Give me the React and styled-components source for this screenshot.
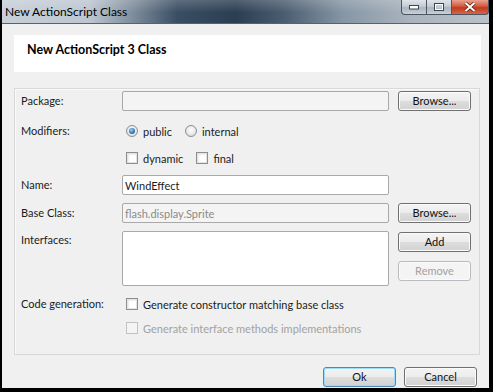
import styled, { createGlobalStyle } from "styled-components";

const GlobalStyle = createGlobalStyle`
  html, body {
    margin: 0;
    padding: 0;
    background: #000;
  }
  body {
    font-family: Lato, "Liberation Sans", Arial, sans-serif;
    font-size: 11px;
    color: #1b1b1b;
  }
`;

const Frame = styled.div`
  width: 493px;
  height: 392px;
  box-sizing: border-box;
  background: #000;
  padding: 0 4px 4px 2px;
  display: flex;
  flex-direction: column;
`;

const TitleBar = styled.div`
  height: 23px;
  flex-shrink: 0;
  display: flex;
  justify-content: space-between;
  background:
    linear-gradient(180deg, rgba(255, 255, 255, 0.18) 0%, rgba(255, 255, 255, 0) 55%),
    linear-gradient(90deg, #c7cfd8 0%, #bcc6d0 18%, #7d8c9b 27%, #3a4e63 36%, #2b3e52 48%, #4b5d70 58%, #8696a5 70%, #aab4be 84%, #b9c1c9 100%);
  border-bottom: 1px solid #56626e;
`;

const Title = styled.div`
  align-self: center;
  padding-left: 3px;
  font-size: 12px;
  color: #000;
`;

const Controls = styled.div`
  display: flex;
  height: 15px;
`;

const CtrlButton = styled.div`
  width: ${(p) => p.$w}px;
  height: 15px;
  box-sizing: border-box;
  display: grid;
  place-items: center;
  border: 1px solid #4c5560;
  border-top: none;
  border-left: ${(p) => (p.$first ? "1px solid #4c5560" : "none")};
  border-radius: ${(p) => (p.$first ? "0 0 0 4px" : p.$last ? "0 0 4px 0" : "0")};
  background: ${(p) =>
    p.$close
      ? "linear-gradient(180deg, #e8a28f 0%, #d4593f 45%, #c03a1e 55%, #d8654a 100%)"
      : "linear-gradient(180deg, #dfe4ea 0%, #c3cbd4 45%, #aab4bf 55%, #c8d0d8 100%)"};
`;

const Body = styled.div`
  flex: 1;
  background: #f0f0f0;
  display: flex;
  flex-direction: column;
  padding: 11px 8px 0 12px;
`;

const Header = styled.div`
  height: 37px;
  box-sizing: border-box;
  background: #fff;
  padding: 7px 0 0 13px;
  font-weight: bold;
  font-size: 12.5px;
  color: #000;
`;

const Panel = styled.div`
  margin: 16px 1px 0 0;
  border: 1px solid #d8d8d8;
  box-shadow: inset 1px 1px 0 #fafafa;
  padding: 2px 0 16px 6px;
  display: flex;
  flex-direction: column;
`;

const Row = styled.div`
  display: grid;
  grid-template-columns: 92px 267px 73px;
  column-gap: 9px;
  align-items: center;
  height: ${(p) => p.$h || 20}px;
  margin-top: ${(p) => p.$top || 0}px;
`;

const Label = styled.div`
  align-self: ${(p) => (p.$start ? "start" : "center")};
  margin-top: ${(p) => (p.$start ? "2px" : "0")};
  line-height: 14px;
  white-space: nowrap;
`;

const Field = styled.div`
  height: ${(p) => p.$h || 20}px;
  box-sizing: border-box;
  border: 1px solid #a9a9a9;
  border-radius: 2px;
  background: ${(p) => (p.$disabled ? "#f4f4f4" : "#fff")};
  color: ${(p) => (p.$disabled ? "#8a8a8a" : "#1b1b1b")};
  padding-left: 2px;
  display: flex;
  align-items: ${(p) => (p.$h ? "flex-start" : "center")};
`;

const Button = styled.div`
  width: 73px;
  height: 20px;
  box-sizing: border-box;
  border: 1px solid ${(p) => (p.$disabled ? "#b8bcc0" : p.$focus ? "#4d87b5" : "#707070")};
  border-radius: 3px;
  background: ${(p) =>
    p.$disabled
      ? "#f4f4f4"
      : "linear-gradient(180deg, #f4f4f4 0%, #ececec 48%, #dddddd 52%, #d2d2d2 100%)"};
  box-shadow: ${(p) => (p.$focus ? "inset 0 0 0 1px #9fdcf6" : "inset 0 0 0 1px #fbfbfb")};
  color: ${(p) => (p.$disabled ? "#a2a2a2" : "#111")};
  display: flex;
  align-items: center;
  justify-content: center;
  line-height: 14px;
`;

const ButtonStack = styled.div`
  align-self: start;
  margin-top: 1px;
  display: flex;
  flex-direction: column;
  gap: 9px;
`;

const Options = styled.div`
  display: flex;
  align-items: center;
  gap: 13px;
  padding-left: 4px;
  grid-column: ${(p) => (p.$full ? "2 / 4" : "auto")};
`;

const Option = styled.div`
  display: flex;
  align-items: center;
  gap: 5px;
  white-space: nowrap;
  color: ${(p) => (p.$disabled ? "#a2a2a2" : "#1b1b1b")};
`;

const Radio = styled.span`
  width: 12px;
  height: 12px;
  box-sizing: border-box;
  border-radius: 50%;
  border: 1px solid #8b8f93;
  background: radial-gradient(circle at 50% 40%, #ffffff 0%, #e6e6e6 60%, #cfcfcf 100%);
  display: grid;
  place-items: center;

  &::after {
    content: "";
    width: 6px;
    height: 6px;
    border-radius: 50%;
    display: ${(p) => (p.$checked ? "block" : "none")};
    background: radial-gradient(circle at 40% 35%, #9fd2f2 0%, #2d7bbd 55%, #174f86 100%);
  }
`;

const Check = styled.span`
  width: 12px;
  height: 12px;
  box-sizing: border-box;
  border: 1px solid ${(p) => (p.$disabled ? "#c2c2c2" : "#8b8f93")};
  background: ${(p) => (p.$disabled ? "#f4f4f4" : "#fff")};
  box-shadow: ${(p) => (p.$disabled ? "none" : "inset 0 0 0 1px #e4e4e4, inset 1px 1px 2px #c8c8c8")};
`;

const Footer = styled.div`
  display: flex;
  justify-content: flex-end;
  gap: 8px;
  margin-top: 12px;
  padding-right: 4px;
`;

const Empty = styled.div``;

function Minimize() {
  return (
    <svg width="10" height="5" viewBox="0 0 10 5">
      <rect x="0.5" y="0.5" width="9" height="3.5" fill="#fff" stroke="#3c4650" />
    </svg>
  );
}

function Maximize() {
  return (
    <svg width="10" height="8" viewBox="0 0 10 8">
      <rect x="0.5" y="0.5" width="9" height="7" fill="none" stroke="#3c4650" />
      <rect x="1.5" y="1.5" width="7" height="5" fill="none" stroke="#fff" />
      <rect x="2.5" y="3" width="5" height="2.5" fill="#c3cbd4" />
    </svg>
  );
}

function CloseX() {
  return (
    <svg width="12" height="10" viewBox="0 0 12 10">
      <path d="M1.5 1 L10.5 9 M10.5 1 L1.5 9" stroke="#5a1a10" strokeWidth="3.4" />
      <path d="M1.5 1 L10.5 9 M10.5 1 L1.5 9" stroke="#fff" strokeWidth="2" />
    </svg>
  );
}

export default function App() {
  return (
    <>
      <GlobalStyle />
      <Frame>
        <TitleBar>
          <Title>New ActionScript Class</Title>
          <Controls>
            <CtrlButton $w={26} $first>
              <Minimize />
            </CtrlButton>
            <CtrlButton $w={25}>
              <Maximize />
            </CtrlButton>
            <CtrlButton $w={37} $close $last>
              <CloseX />
            </CtrlButton>
          </Controls>
        </TitleBar>
        <Body>
          <Header>New ActionScript 3 Class</Header>
          <Panel>
            <Row>
              <Label>Package:</Label>
              <Field $disabled />
              <Button>Browse...</Button>
            </Row>
            <Row $top={10}>
              <Label>Modifiers:</Label>
              <Options>
                <Option>
                  <Radio $checked />
                  public
                </Option>
                <Option>
                  <Radio />
                  internal
                </Option>
              </Options>
              <Empty />
            </Row>
            <Row $top={7}>
              <Empty />
              <Options>
                <Option>
                  <Check />
                  dynamic
                </Option>
                <Option>
                  <Check />
                  final
                </Option>
              </Options>
              <Empty />
            </Row>
            <Row $top={7}>
              <Label>Name:</Label>
              <Field>WindEffect</Field>
              <Empty />
            </Row>
            <Row $top={8}>
              <Label>Base Class:</Label>
              <Field $disabled>flash.display.Sprite</Field>
              <Button>Browse...</Button>
            </Row>
            <Row $top={8} $h={55}>
              <Label $start>Interfaces:</Label>
              <Field $h={55} />
              <ButtonStack>
                <Button>Add</Button>
                <Button $disabled>Remove</Button>
              </ButtonStack>
            </Row>
            <Row $top={8}>
              <Label>Code generation:</Label>
              <Options $full>
                <Option>
                  <Check />
                  Generate constructor matching base class
                </Option>
              </Options>
            </Row>
            <Row $top={4}>
              <Empty />
              <Options $full>
                <Option $disabled>
                  <Check $disabled />
                  Generate interface methods implementations
                </Option>
              </Options>
            </Row>
          </Panel>
          <Footer>
            <Button $focus>Ok</Button>
            <Button>Cancel</Button>
          </Footer>
        </Body>
      </Frame>
    </>
  );
}
